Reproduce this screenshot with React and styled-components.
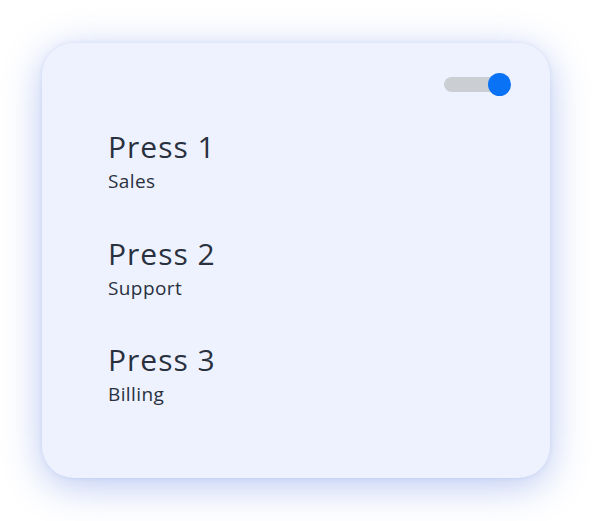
import React from "react";
import styled, { createGlobalStyle } from "styled-components";

const Global = createGlobalStyle`
  html, body { margin: 0; padding: 0; background: #ffffff; }
  body { font-family: "Open Sans", "Noto Sans", sans-serif; }
`;

const Page = styled.div`
  width: 592px;
  height: 521px;
  box-sizing: border-box;
  padding: 43px 42px;
`;

const Card = styled.div`
  box-sizing: border-box;
  width: 508px;
  height: 435px;
  border-radius: 32px;
  background: #eef2fe;
  box-shadow: 0 8px 38px rgba(105, 135, 228, 0.45), 0 0 4px rgba(150, 175, 235, 0.25);
  padding: 30px 39px 0 66px;
  display: flex;
  flex-direction: column;
`;

const TopBar = styled.div`
  display: flex;
  justify-content: flex-end;
  height: 23px;
`;

const Toggle = styled.div`
  position: relative;
  width: 67px;
  height: 23px;
  display: flex;
  align-items: center;
`;

const Track = styled.div`
  width: 56px;
  height: 15px;
  border-radius: 8px;
  background: #cbcfd3;
`;

const Knob = styled.div`
  position: absolute;
  right: 0;
  top: 0;
  width: 23px;
  height: 23px;
  border-radius: 50%;
  background: #0a72f5;
`;

const List = styled.div`
  display: flex;
  flex-direction: column;
  gap: 42.5px;
  margin-top: 33px;
`;

const Item = styled.div`
  display: flex;
  flex-direction: column;
  color: #29303e;
`;

const Title = styled.div`
  font-size: 30px;
  line-height: 36px;
  font-weight: 400;
  letter-spacing: 1px;
`;

const Sub = styled.div`
  margin-top: 4px;
  font-size: 19px;
  line-height: 24px;
  letter-spacing: 0.4px;
`;

const items = [
  ["Press 1", "Sales"],
  ["Press 2", "Support"],
  ["Press 3", "Billing"],
];

export default function App() {
  return (
    <Page>
      <Global />
      <Card>
        <TopBar>
          <Toggle>
            <Track />
            <Knob />
          </Toggle>
        </TopBar>
        <List>
          {items.map(([t, s]) => (
            <Item key={t}>
              <Title>{t}</Title>
              <Sub>{s}</Sub>
            </Item>
          ))}
        </List>
      </Card>
    </Page>
  );
}
